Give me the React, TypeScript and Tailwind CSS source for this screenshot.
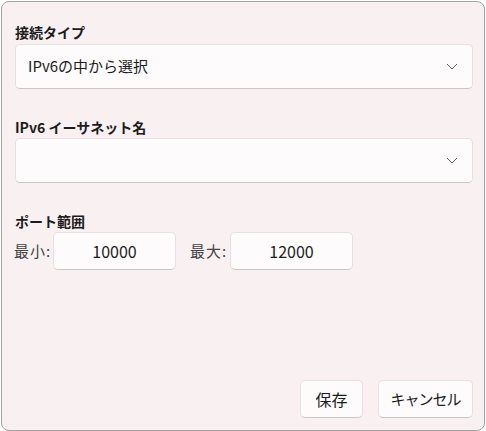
import React from "react";

const font = { fontFamily: '"Noto Sans CJK JP", "Noto Sans", sans-serif' };

function Chevron() {
  return (
    <svg width="12" height="7" viewBox="0 0 12 7" fill="none">
      <path d="M1 1l5 5 5-5" stroke="#5c5c5c" strokeWidth="1" />
    </svg>
  );
}

function Combo({ value }: { value?: string }) {
  return (
    <div className="flex h-[45px] items-center justify-between rounded-[5px] border border-[#e6e0e2] border-b-[#cbc6c8] bg-[#fdfbfc] pl-[12px] pr-[14px]">
      <span className="text-[15px] text-[#1c1c1c]">{value}</span>
      <Chevron />
    </div>
  );
}

function NumBox({ value }: { value: string }) {
  return (
    <div className="flex h-[38px] w-[123px] items-center justify-center rounded-[5px] border border-[#e6e0e2] border-b-[#cbc6c8] bg-[#fdfbfc] text-[16px] text-[#1c1c1c]">
      {value}
    </div>
  );
}

export default function App() {
  return (
    <div className="h-[431px] w-[486px] bg-white pl-px pt-px" style={font}>
      <div className="flex h-[430px] w-[484px] flex-col rounded-[8px] border border-[#a3a3a3] bg-[#f9f0f2] pl-[13px] pr-[11px] pt-[20px] pb-[12px]">
        {/* Connection type */}
        <label className="h-[22px] text-[14px] font-semibold leading-[20px] text-[#1c1c1c]">
          接続タイプ
        </label>
        <Combo value="IPv6の中から選択" />

        {/* Ethernet */}
        <label className="mt-[28px] h-[21px] text-[14px] font-semibold leading-[20px] text-[#1c1c1c]">
          IPv6 イーサネット名
        </label>
        <Combo />

        {/* Ports */}
        <label className="mt-[28px] h-[21px] text-[14px] font-semibold leading-[20px] text-[#1c1c1c]">
          ポート範囲
        </label>
        <div className="flex items-center text-[15px] text-[#444]">
          <span className="-ml-px w-[39px] tracking-[1px]">最小:</span>
          <NumBox value="10000" />
          <span className="ml-[14px] w-[40px] tracking-[1px]">最大:</span>
          <NumBox value="12000" />
        </div>

        {/* Actions */}
        <div className="mt-auto flex justify-end gap-[15px]">
          <button className="h-[38px] w-[63px] rounded-[5px] border border-[#e6e0e2] border-b-[#cbc6c8] bg-[#fdfbfc] text-[16px] text-[#1c1c1c]">
            保存
          </button>
          <button className="h-[38px] w-[95px] rounded-[5px] border border-[#e6e0e2] border-b-[#cbc6c8] bg-[#fdfbfc] text-[15px] tracking-[-1px] text-[#1c1c1c]">
            キャンセル
          </button>
        </div>
      </div>
    </div>
  );
}
